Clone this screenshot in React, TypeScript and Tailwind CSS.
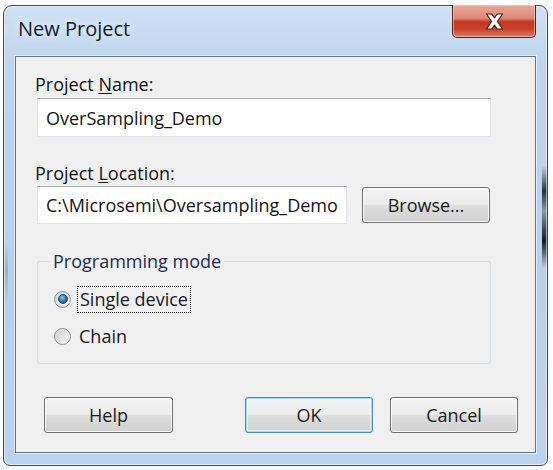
import { useState } from 'react';

const font = "font-['Open_Sans','Noto_Sans',sans-serif]";

function CloseButton() {
  return (
    <button className="-mt-[1px] mr-[11px] w-[84px] h-[33px] rounded-b-[5px] border border-t-0 border-[#57231b] bg-[linear-gradient(to_bottom,#eaa898_0%,#df8874_42%,#c5371f_52%,#c9412a_75%,#dc7d63_100%)] shadow-[inset_0_0_0_1px_rgba(255,215,205,0.55)] flex items-center justify-center">
      <svg width="19" height="17" viewBox="0 0 19 17">
        <path
          d="M1.5 1 L6.8 1 L9.5 4.8 L12.2 1 L17.5 1 L12.4 8.5 L17.5 16 L12.2 16 L9.5 12.2 L6.8 16 L1.5 16 L6.6 8.5 Z"
          fill="#ffffff"
          stroke="#4e1a12"
          strokeWidth="1.2"
          strokeLinejoin="round"
        />
      </svg>
    </button>
  );
}

function Btn({ label, primary = false, className = '' }: { label: string; primary?: boolean; className?: string }) {
  return (
    <button
      className={
        'h-[36px] rounded-[3px] border text-[18px] leading-[20px] text-[#1b1b1b] bg-[linear-gradient(to_bottom,#f4f4f4_0%,#ececec_48%,#dddddd_52%,#d1d1d1_100%)] ' +
        (primary
          ? 'border-[#3c8fc4] shadow-[inset_0_0_0_1px_#a7dcf3,inset_0_0_0_2px_rgba(255,255,255,0.5)] '
          : 'border-[#707070] shadow-[inset_0_0_0_1px_rgba(255,255,255,0.85)] ') +
        className
      }
    >
      {label}
    </button>
  );
}

function Radio({ checked }: { checked: boolean }) {
  return (
    <span className="w-[17px] h-[17px] rounded-full border border-[#8c8f93] bg-[linear-gradient(135deg,#d2d2d2,#f8f8f8)] flex items-center justify-center shrink-0">
      {checked ? (
        <span className="w-[10px] h-[10px] rounded-full bg-[radial-gradient(circle_at_40%_35%,#86cdf7_0%,#2f7fbb_45%,#143f68_100%)] border border-[#1a466d]" />
      ) : (
        <span className="w-[11px] h-[11px] rounded-full bg-[linear-gradient(135deg,#cfcfcf,#f6f6f6)]" />
      )}
    </span>
  );
}

function TextField({ value, width }: { value: string; width: string }) {
  return (
    <div
      className={
        'bg-white border border-[#e2e5ea] border-t-[#abadb3] flex items-center pl-[8px] text-[18px] leading-[20px] text-[#141414] whitespace-nowrap ' +
        width
      }
    >
      {value}
    </div>
  );
}

export default function App() {
  const [mode, setMode] = useState('single');

  return (
    <div className={'w-[553px] h-[470px] bg-white pt-[5px] pl-[3px] ' + font}>
      <div className="w-[545px] h-[461px] rounded-t-[9px] rounded-b-[7px] border border-[#3b4756] [background-image:linear-gradient(to_bottom,transparent_160px,#26313f_185px,#8597ab_205px,#121c28_235px,transparent_262px),linear-gradient(to_bottom,transparent_235px,#9fb0c2_265px,transparent_300px),linear-gradient(to_bottom,#d0e2f5_0%,#bed5ee_12%,#b9d0eb_60%,#bcd3ed_100%)] [background-size:5px_100%,4px_100%,100%_100%] [background-position:right_top,left_top,left_top] bg-no-repeat shadow-[inset_0_0_0_1px_rgba(255,255,255,0.55)] flex flex-col">
        <div className="h-[50px] flex items-start justify-between">
          <div className="pl-[14px] pt-[11px] text-[20px] leading-[24px] text-[#121a26] [text-shadow:0_0_8px_rgba(255,255,255,0.9)]">New Project</div>
          <CloseButton />
        </div>

        <div className="mx-[11px] h-[397px] border border-[#637489] bg-[#f0f0f0] shadow-[0_0_0_1px_rgba(255,255,255,0.6)] pl-[21px] flex flex-col">
          <div className="mt-[17px] -ml-[2px] text-[18px] leading-[20px] text-[#141414]">
            Project <span className="underline underline-offset-2">N</span>ame:
          </div>
          <TextField value="OverSampling_Demo" width="mt-[4px] w-[454px] h-[39px]" />

          <div className="mt-[26px] -ml-[2px] text-[18px] leading-[20px] text-[#141414]">
            Project <span className="underline underline-offset-2">L</span>ocation:
          </div>
          <div className="mt-[3px] flex items-center">
            <TextField value="C:\Microsemi\Oversampling_Demo" width="w-[310px] h-[38px]" />
            <Btn label="Browse..." className="ml-[15px] w-[128px]" />
          </div>

          <fieldset className="mt-[27px] w-[454px] h-[113px] border border-[#d3dbe2] rounded-[3px] px-[16px]">
            <legend className="ml-[-4px] px-[3px] text-[18px] leading-[20px] text-[#1a2c55]">Programming mode</legend>
            <div className="mt-[15px] h-[26px] flex items-center cursor-default" onClick={() => setMode('single')}>
              <Radio checked={mode === 'single'} />
              <span className="ml-[6px] px-[2px] h-[27px] flex items-center border border-dotted border-[#222] text-[18px] leading-[20px] text-[#17182a]">
                Single device
              </span>
            </div>
            <div className="mt-[11px] h-[26px] flex items-center cursor-default" onClick={() => setMode('chain')}>
              <Radio checked={mode === 'chain'} />
              <span className="ml-[8px] text-[18px] leading-[20px] text-[#17182a]">Chain</span>
            </div>
          </fieldset>

          <div className="mt-[33px] ml-[7px] flex">
            <Btn label="Help" className="w-[129px]" />
            <Btn label="OK" primary className="ml-[72px] w-[128px]" />
            <Btn label="Cancel" className="ml-[17px] w-[128px]" />
          </div>
        </div>
      </div>
    </div>
  );
}
